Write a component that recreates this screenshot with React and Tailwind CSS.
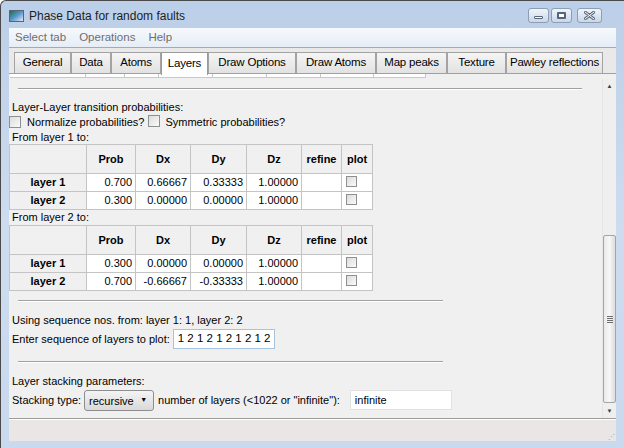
import React from "react";

const font = { fontFamily: '"Liberation Sans", Arial, sans-serif' };

const tabs = [
  { label: "General", w: 57 },
  { label: "Data", w: 40 },
  { label: "Atoms", w: 50 },
  { label: "Layers", w: 47, active: true },
  { label: "Draw Options", w: 88 },
  { label: "Draw Atoms", w: 80 },
  { label: "Map peaks", w: 71 },
  { label: "Texture", w: 59 },
  { label: "Pawley reflections", w: 97 },
];

const miniTabs = [76, 39, 34, 54, 54, 54, 53, 52];

const colW = [77, 49, 55, 56, 55, 40, 31];

const CheckBox = ({ small }) => (
  <span
    className={
      "inline-block border border-[#8f8f8f] bg-gradient-to-br from-[#dcdcdc] to-[#fafafa] " +
      (small ? "w-[11px] h-[11px]" : "w-[12px] h-[12px]")
    }
  />
);

const Hr = ({ w, className }) => (
  <div className={"h-[2px] border-t border-[#a0a0a0] border-b border-b-white " + (className || "")} style={{ width: w }} />
);

const LayerTable = ({ rows }) => (
  <table className="self-start table-fixed w-[364px] border-collapse border border-[#a8a8a8] text-[11px]">
    <colgroup>
      {colW.map((w, i) => (
        <col key={i} style={{ width: w }} />
      ))}
    </colgroup>
    <thead>
      <tr className="h-[29px]">
        {["", "Prob", "Dx", "Dy", "Dz", "refine", "plot"].map((h, i) => (
          <th key={i} className="border border-[#c4c4c4] bg-[#f0f0f0] font-bold text-center p-0">
            {h}
          </th>
        ))}
      </tr>
    </thead>
    <tbody>
      {rows.map((r) => (
        <tr key={r[0]} className="h-[18px]">
          <td className="border border-[#c4c4c4] bg-[#f0f0f0] font-bold text-center p-0">{r[0]}</td>
          {r.slice(1).map((v, i) => (
            <td key={i} className="border border-[#c4c4c4] bg-white text-right p-0 pr-[3px]">
              {v}
            </td>
          ))}
          <td className="border border-[#c4c4c4] bg-white p-0"></td>
          <td className="border border-[#c4c4c4] bg-white p-0 pl-[4px] leading-none align-middle">
            <CheckBox small />
          </td>
        </tr>
      ))}
    </tbody>
  </table>
);

const WinBtn = ({ w, children, className }) => (
  <div
    className={
      "h-[15px] rounded-[3px] border border-[#8c9db4] bg-gradient-to-b from-[#f1f5fa] via-[#dde6f1] to-[#c9d7e8] flex items-center justify-center " +
      (className || "")
    }
    style={{ width: w }}
  >
    {children}
  </div>
);

export default function App() {
  return (
    <div
      className="w-[624px] h-[448px] overflow-hidden bg-gradient-to-b from-[#bccfe8] via-[#cddcef] to-[#c9d9ee] border-t border-l border-[#4a4a4a] rounded-tl-[6px] flex flex-col text-black"
      style={font}
    >
      {/* title bar */}
      <div className="h-[27px] flex items-center pl-[8px] pr-[22px] shrink-0">
        <div className="w-[15px] h-[12px] mt-[3px] border border-[#55657a] bg-gradient-to-br from-[#1f6e3c] via-[#5c97cf] to-[#e4ecf5]" />
        <span className="ml-[5px] mt-[3px] text-[12px] text-[#1e1e1e]">Phase Data for random faults</span>
        <div className="ml-auto flex gap-[2px] mt-[2px]">
          <WinBtn w={21}>
            <div className="w-[9px] h-[3px] border border-[#55657a] bg-white rounded-[1px] mt-[4px]" />
          </WinBtn>
          <WinBtn w={21}>
            <div className="w-[9px] h-[7px] border-2 border-[#55657a] bg-white rounded-[1px]" />
          </WinBtn>
          <WinBtn w={25} className="ml-[3px]">
            <svg width="11" height="9" viewBox="0 0 11 9">
              <path d="M1 1 L10 8 M10 1 L1 8" stroke="#5d6e84" strokeWidth="3" strokeLinecap="round" />
              <path d="M1 1 L10 8 M10 1 L1 8" stroke="#ffffff" strokeWidth="1" strokeLinecap="round" />
            </svg>
          </WinBtn>
        </div>
      </div>

      <div className="flex-1 flex flex-col px-[8px] pb-[7px]">
        {/* menu bar */}
        <div className="h-[19px] bg-gradient-to-b from-[#f6f9fd] to-[#e6edf6] flex items-center text-[11.5px] text-[#6e6e6e] gap-[13px] pl-[6px] shrink-0">
          <span>Select tab</span>
          <span>Operations</span>
          <span>Help</span>
        </div>

        {/* tab strip */}
        <div className="bg-[#e9e9e9] border-t border-[#a9a9a9] pt-[4px] shrink-0">
          <div className="flex items-end h-[21px] pl-[5px]">
            {tabs.map((t) =>
              t.active ? (
                <div
                  key={t.label}
                  className="h-[23px] -mb-[2px] bg-white border border-b-0 border-[#9a9a9a] flex items-center justify-center text-[11.5px] tracking-[-0.2px] relative z-10"
                  style={{ width: t.w }}
                >
                  {t.label}
                </div>
              ) : (
                <div
                  key={t.label}
                  className="h-[21px] bg-gradient-to-b from-[#f5f5f5] to-[#e2e2e2] border border-b-0 border-[#a3a3a3] flex items-center justify-center text-[11.5px] tracking-[-0.2px]"
                  style={{ width: t.w }}
                >
                  {t.label}
                </div>
              )
            )}
          </div>
          <div className="h-[6px] border-t border-[#a0a0a0] bg-[#f0f0f0] flex pl-[1px]">
            {miniTabs.map((w, i) => (
              <div key={i} className="h-[4px] bg-white border-b border-r border-[#c8c8c8]" style={{ width: w }} />
            ))}
          </div>
        </div>

        {/* content panel */}
        <div className="flex-1 flex bg-[#f0f0f0] border-b border-[#9c9c9c] text-[11px] min-h-0">
          <div className="flex-1 flex flex-col">
            <Hr w={564} className="ml-[9px] mt-[9px]" />
            <div className="h-[12px] mt-[11px] leading-[12px] pl-[3px]">Layer-Layer transition probabilities:</div>
            <div className="h-[14px] mt-[2px] flex items-center">
              <CheckBox />
              <span className="ml-[6px]">Normalize probabilities?</span>
              <span className="ml-[4px] leading-none"><CheckBox /></span>
              <span className="ml-[5px]">Symmetric probabilities?</span>
            </div>
            <div className="h-[14px] mt-[1px] leading-[14px] pl-[3px]">From layer 1 to:</div>
            <LayerTable
              rows={[
                ["layer 1", "0.700", "0.66667", "0.33333", "1.00000"],
                ["layer 2", "0.300", "0.00000", "0.00000", "1.00000"],
              ]}
            />
            <div className="h-[15px] leading-[15px] pl-[3px]">From layer 2 to:</div>
            <LayerTable
              rows={[
                ["layer 1", "0.300", "0.00000", "0.00000", "1.00000"],
                ["layer 2", "0.700", "-0.66667", "-0.33333", "1.00000"],
              ]}
            />
            <Hr w={425} className="ml-[9px] mt-[9px]" />
            <div className="h-[14px] mt-[11px] leading-[14px] pl-[3px]">Using sequence nos. from: layer 1: 1, layer 2: 2</div>
            <div className="h-[20px] mt-[2px] flex items-center pl-[3px]">
              <span>Enter sequence of layers to plot:</span>
              <div className="ml-[3px] w-[102px] h-[20px] bg-white border border-[#a6c4e2] flex items-center pl-[4px] text-[11.5px]">
                1 2 1 2 1 2 1 2 1 2
              </div>
            </div>
            <Hr w={425} className="ml-[9px] mt-[12px]" />
            <div className="h-[14px] mt-[11px] leading-[14px] pl-[3px]">Layer stacking parameters:</div>
            <div className="h-[22px] mt-[1px] flex items-center pl-[3px]">
              <span>Stacking type:</span>
              <div className="ml-[3px] w-[70px] h-[21px] rounded-[3px] border border-[#8e8e8e] bg-gradient-to-b from-[#f4f4f4] to-[#d9d9d9] flex items-center pl-[4px] pr-[6px]">
                <span className="text-[11px] mt-[3px]">recursive</span>
                <span className="ml-auto text-[7px]">▼</span>
              </div>
              <span className="ml-[4px]">number of layers (&lt;1022 or "infinite"):</span>
              <div className="ml-[10px] w-[102px] h-[20px] bg-white border border-[#e2e2e2] flex items-center pl-[4px]">
                infinite
              </div>
            </div>
          </div>

          {/* scrollbar */}
          <div className="w-[14px] flex flex-col border-l border-[#e6e6e6] bg-[#efefef]">
            <div className="h-[12px] flex items-center justify-center text-[6px] text-[#3c3c3c] mt-[1px]">▲</div>
            <div className="flex-1 flex flex-col">
              <div className="h-[143px]" />
              <div className="h-[168px] rounded-[2px] border border-[#a5a5a5] bg-gradient-to-r from-[#e9e9e9] via-[#f7f7f7] to-[#dcdcdc] flex items-center justify-center">
                <div className="flex flex-col gap-[1px]">
                  <div className="w-[6px] h-px bg-[#6e6e6e]" />
                  <div className="w-[6px] h-px bg-[#6e6e6e]" />
                  <div className="w-[6px] h-px bg-[#6e6e6e]" />
                  <div className="w-[6px] h-px bg-[#6e6e6e]" />
                </div>
              </div>
            </div>
            <div className="h-[14px] flex items-center justify-center text-[6px] text-[#3c3c3c]">▼</div>
          </div>
        </div>

        {/* status area */}
        <div className="h-[22px] bg-[#ebe6e6] border-t border-white flex justify-end items-end pr-[1px] pb-[1px] shrink-0">
          <span className="text-[7px] text-[#9c9c9c] leading-none">⋰</span>
        </div>
      </div>
    </div>
  );
}
